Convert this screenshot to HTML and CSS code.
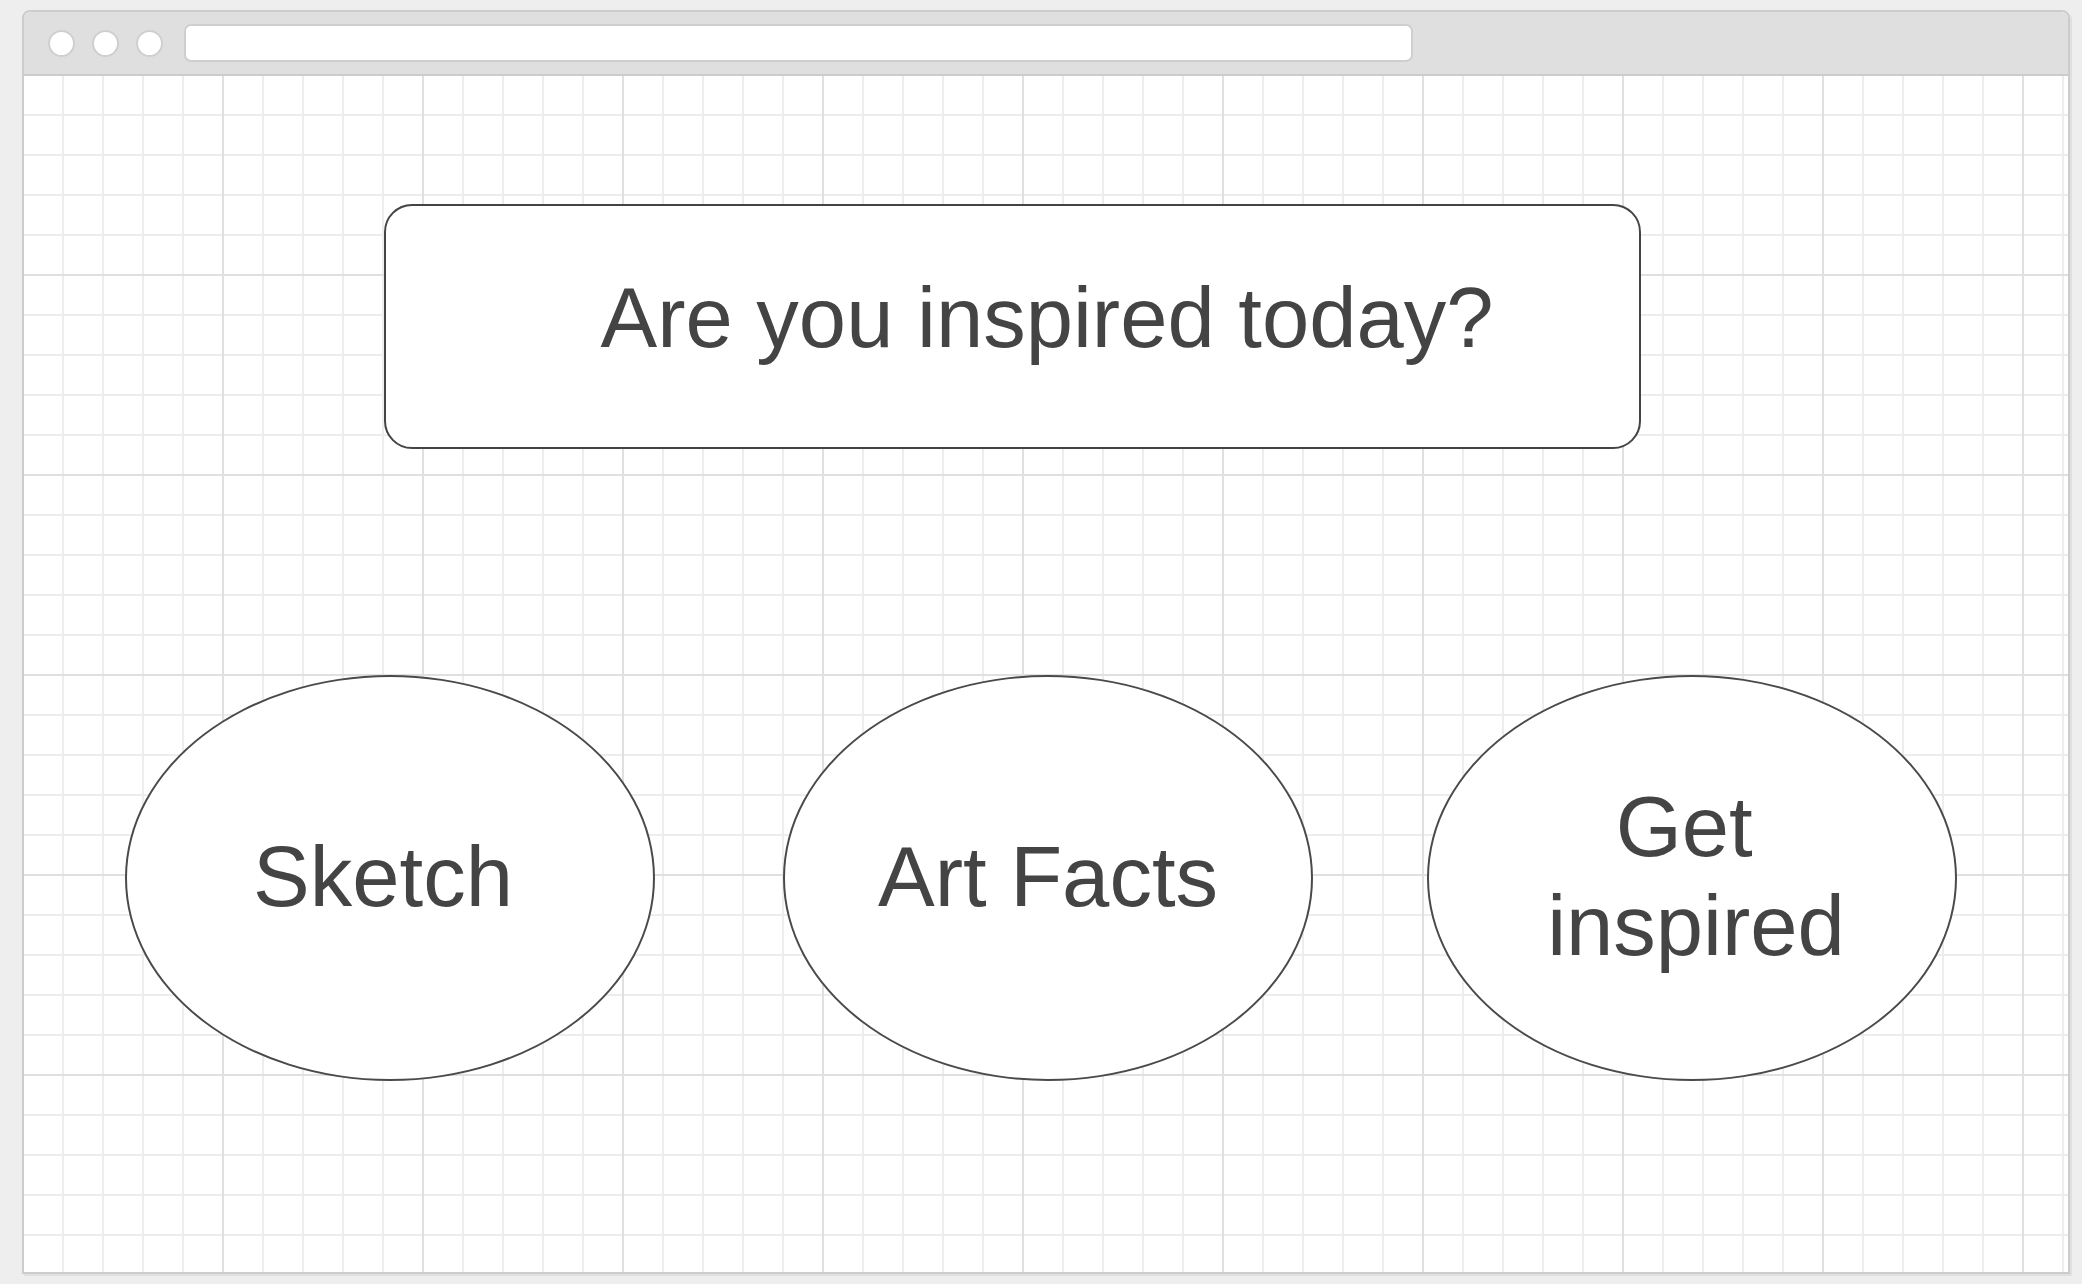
FILE: index.html
```html
<!DOCTYPE html>
<html lang="en">
<head>
<meta charset="utf-8">
<title>Are you inspired today?</title>
<link rel="stylesheet" href="styles.css">
</head>
<body>
<div class="window">
  <div class="titlebar">
    <span class="dot"></span>
    <span class="dot"></span>
    <span class="dot"></span>
    <div class="address"></div>
  </div>
  <div class="canvas">
    <div class="question">Are you inspired today?</div>
    <div class="choices">
      <div class="choice choice-sketch">Sketch</div>
      <div class="choice choice-facts">Art Facts</div>
      <div class="choice choice-inspired">Get&nbsp;<br>inspired</div>
    </div>
  </div>
</div>
</body>
</html>
```
FILE: styles.css
```css
html, body {
  margin: 0;
  padding: 0;
}
body {
  background: #eeeeee;
  width: 2082px;
  height: 1284px;
  overflow: hidden;
  padding: 10px 0 0 22px;
  box-sizing: border-box;
  font-family: "Liberation Sans", Arial, sans-serif;
}
.window {
  width: 2048px;
  height: 1264px;
  box-sizing: border-box;
  border: 2px solid #cccccc;
  border-radius: 8px 8px 0 0;
  background: #ffffff;
  box-shadow: 2px 2px 0 #e0e0e0;
  display: flex;
  flex-direction: column;
  overflow: hidden;
}
.titlebar {
  height: 64px;
  box-sizing: border-box;
  flex: none;
  background: #dfdfdf;
  border-bottom: 2px solid #cccccc;
  display: flex;
  align-items: center;
  padding-left: 24px;
  gap: 17px;
}
.dot {
  width: 27px;
  height: 27px;
  box-sizing: border-box;
  border-radius: 50%;
  background: #ffffff;
  border: 2px solid #cfcfcf;
  flex: none;
}
.address {
  margin-left: 4px;
  width: 1229px;
  height: 38px;
  box-sizing: border-box;
  background: #ffffff;
  border: 2px solid #cfcfcf;
  border-radius: 7px;
}
.canvas {
  flex: 1;
  background-color: #ffffff;
  background-image:
    linear-gradient(to right, transparent 198px, #e0e0e0 198px, #e0e0e0 200px),
    linear-gradient(to bottom, transparent 198px, #e0e0e0 198px, #e0e0e0 200px),
    linear-gradient(to right, transparent 38px, #ededed 38px, #ededed 40px),
    linear-gradient(to bottom, transparent 38px, #ededed 38px, #ededed 40px);
  background-size: 200px 200px, 200px 200px, 40px 40px, 40px 40px;
  padding-top: 128px;
  color: #444444;
  font-size: 85px;
  line-height: 99px;
}
.question {
  margin-left: 360px;
  width: 1257px;
  height: 245px;
  box-sizing: border-box;
  border: 2px solid #444444;
  border-radius: 28px;
  background: #ffffff;
  display: flex;
  align-items: center;
  justify-content: center;
  padding-left: 69px;
  padding-bottom: 19px;
  white-space: nowrap;
}
.choices {
  display: flex;
  margin-top: 226px;
}
.choice {
  width: 530px;
  height: 406px;
  box-sizing: border-box;
  border: 2px solid #4a4a4a;
  border-radius: 50%;
  background: #ffffff;
  display: flex;
  align-items: center;
  justify-content: center;
  text-align: center;
  padding-bottom: 4px;
  flex: none;
}
.choice-sketch {
  margin-left: 101px;
  padding-right: 14px;
}
.choice-facts {
  margin-left: 128px;
}
.choice-inspired {
  margin-left: 114px;
  padding-left: 8px;
}
```
